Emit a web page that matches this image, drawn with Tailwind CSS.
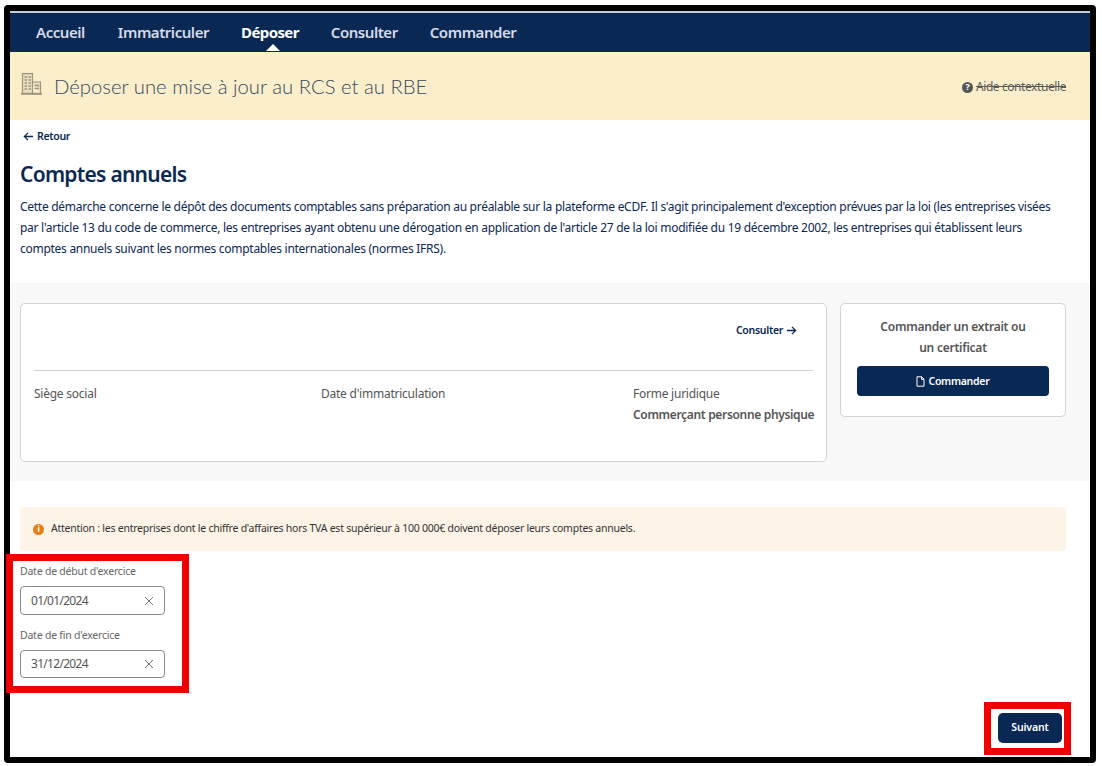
<!DOCTYPE html>
<html lang="fr">
<head>
    <meta charset="UTF-8">
    <title>Comptes annuels</title>
    <script src="https://cdn.jsdelivr.net/npm/@tailwindcss/browser@4"></script>
</head>
<body class="bg-white font-['Noto_Sans',sans-serif]">
    <div class="h-[766px] w-[1102px] overflow-hidden bg-white">
        <div class="relative ml-[4px] mt-[5px] h-[758px] w-[1092px] rounded-sm border-[6px] border-black bg-white">
            <!-- Top nav -->
            <nav class="flex h-[41px] items-center gap-8 border-t-2 border-[#c9ced6] bg-[#0a2854] pl-[26px] text-[15px] font-semibold tracking-[-0.03em] text-[#d5dbe5]">
                <a>Accueil</a>
                <a class="ml-[1px]">Immatriculer</a>
                <a class="relative font-bold tracking-[-0.04em] text-white">Déposer
                    <span class="absolute left-[25px] top-[23px] h-0 w-0 border-x-[7px] border-b-[7px] border-x-transparent border-b-white"></span>
                </a>
                <a>Consulter</a>
                <a>Commander</a>
            </nav>

            <!-- Page banner -->
            <div class="flex h-[68px] items-center justify-between bg-[#faeecb] pl-[11px] pr-[24px]">
                <div class="flex items-center gap-[12px]">
                    <svg class="mb-[4px] h-[22px] w-[21px]" viewBox="0 0 21 22" fill="#e9dfbd" stroke="#9c9580">
                        <path d="M1.5 20V.7h10V20M11.5 9h8v11" stroke-width="1.2"/>
                        <path d="M3.5 4h2.5M7.5 4H10M3.5 7h2.5M7.5 7H10M3.5 10h2.5M7.5 10H10M3.5 13h2.5M7.5 13H10M3.5 16h2.5M7.5 16H10M13.5 12.5h4.5M13.5 15.5h4.5" stroke-width="1.6"/>
                        <path d="M0 20.8h21" stroke-width="2"/>
                    </svg>
                    <h2 class="pt-[1px] font-['Lato',sans-serif] text-[20.3px] font-light text-[#3b4a5e]">Déposer une mise à jour au RCS et au RBE</h2>
                </div>
                <div class="flex items-center gap-[3px] pt-[2px] text-[12px] tracking-[-0.035em] text-[#5a5a5a]">
                    <span class="flex h-[11px] w-[11px] items-center justify-center rounded-full bg-[#555] text-[9px] font-bold text-white">?</span>
                    <span class="line-through">Aide contextuelle</span>
                </div>
            </div>

            <!-- Intro -->
            <div class="px-[10px]">
                <a class="mt-[8px] flex items-center gap-[3px] pl-[3px] text-[10.5px] font-semibold leading-[16px] tracking-[-0.03em] text-[#0a2854]">
                    <svg class="h-[11px] w-[11px]" viewBox="0 0 12 12" fill="none" stroke="currentColor" stroke-width="1.4"><path d="M11 6H1.5M5.5 2 1.5 6l4 4"/></svg>
                    Retour
                </a>
                <h1 class="mt-[17px] text-[21px] font-semibold leading-[26px] tracking-[-0.035em] text-[#0a2854]">Comptes annuels</h1>
                <p class="mt-[9px] w-[1040px] text-[12px] leading-[21px] tracking-[-0.023em] text-[#0a2854]">Cette démarche concerne le dépôt des documents comptables sans préparation au préalable sur la plateforme eCDF. Il s'agit principalement d'exception prévues par la loi (les entreprises visées par l'article 13 du code de commerce, les entreprises ayant obtenu une dérogation en application de l'article 27 de la loi modifiée du 19 décembre 2002, les entreprises qui établissent leurs comptes annuels suivant les normes comptables internationales (normes IFRS).</p>
            </div>

            <!-- Company section -->
            <section class="mt-[24px] flex h-[198px] items-start gap-[13px] bg-[#f8f8f8] px-[10px] pt-[20px]">
                <div class="h-[159px] w-[807px] rounded-[5px] border border-[#d4d4d4] bg-white px-[13px]">
                    <div class="flex h-[67px] items-start justify-end border-b border-[#d4d4d4] pr-[16px] pt-[19px]">
                        <a class="flex items-center gap-[3px] text-[10.5px] font-semibold leading-[15px] tracking-[-0.028em] text-[#0a2854]">Consulter
                            <svg class="h-[11px] w-[11px]" viewBox="0 0 12 12" fill="none" stroke="currentColor" stroke-width="1.4"><path d="M1 6h9.5M6.5 2l4 4-4 4"/></svg>
                        </a>
                    </div>
                    <div class="flex pt-[12px] text-[12px] leading-[21px] tracking-[-0.02em] text-[#555]">
                        <div class="w-[287px] shrink-0">Siège social</div>
                        <div class="w-[312px] shrink-0">Date d'immatriculation</div>
                        <div class="flex-1">
                            <div>Forme juridique</div>
                            <div class="whitespace-nowrap font-semibold tracking-[-0.0275em]">Commerçant personne physique</div>
                        </div>
                    </div>
                </div>
                <div class="h-[114px] w-[226px] rounded-[5px] border border-[#d4d4d4] bg-white px-[16px] pt-[12px] text-center">
                    <p class="text-[12px] font-semibold leading-[21px] tracking-[-0.02em] text-[#555]">Commander un extrait ou<br>un certificat</p>
                    <button class="mt-[8px] flex h-[30px] w-full items-center justify-center gap-[3px] rounded-[4px] bg-[#0a2854] pt-[1px] text-[10.5px] font-semibold tracking-[-0.025em] text-white">
                        <svg class="h-[11px] w-[9px]" viewBox="0 0 9 11" fill="none" stroke="currentColor" stroke-width="1"><path d="M1 .8h4.6L8 3.2v7H1zM5.5.8v2.5H8"/></svg>
                        Commander
                    </button>
                </div>
            </section>

            <!-- Warning -->
            <div class="ml-[10px] mt-[26px] flex h-[44px] w-[1046px] items-center gap-[7px] rounded-[4px] bg-[#fdf3e7] px-[13px] text-[10.5px] tracking-[-0.0237em] text-[#333]">
                <span class="flex h-[11px] w-[11px] items-center justify-center rounded-full bg-[#e67e16] text-[8px] font-bold text-white">i</span>
                Attention : les entreprises dont le chiffre d'affaires hors TVA est supérieur à 100 000€ doivent déposer leurs comptes annuels.
            </div>

            <!-- Date fields -->
            <form class="mt-[12px] px-[10px] text-[#666]">
                <label class="block text-[10.5px] leading-[16px] tracking-[-0.021em]">Date de début d'exercice</label>
                <div class="mt-[7px] flex h-[29px] w-[145px] items-center justify-between rounded-[4px] border border-[#8a8a8a] px-[10px] text-[12px] tracking-[-0.7px] text-[#555]">
                    01/01/2024
                    <svg class="h-[10px] w-[10px]" viewBox="0 0 10 10" stroke="#777" stroke-width="1"><path d="m1 1 8 8M9 1 1 9"/></svg>
                </div>
                <label class="mt-[12px] block text-[10.5px] leading-[16px] tracking-[-0.021em]">Date de fin d'exercice</label>
                <div class="mt-[7px] flex h-[28px] w-[145px] items-center justify-between rounded-[4px] border border-[#8a8a8a] px-[10px] text-[12px] tracking-[-0.7px] text-[#555]">
                    31/12/2024
                    <svg class="h-[10px] w-[10px]" viewBox="0 0 10 10" stroke="#777" stroke-width="1"><path d="m1 1 8 8M9 1 1 9"/></svg>
                </div>
            </form>

            <button class="absolute left-[988px] top-[702px] flex h-[30px] w-[64px] items-center justify-center rounded-[5px] bg-[#0a2854] text-[10.5px] font-semibold tracking-[-0.01em] text-white">Suivant</button>

            <!-- Red annotation frames -->
            <div class="absolute left-[-4px] top-[543px] h-[139px] w-[183px] border-[7px] border-[#f00000]"></div>
            <div class="absolute left-[974px] top-[691px] h-[53px] w-[87px] border-[7px] border-[#f00000]"></div>
        </div>
    </div>
</body>
</html>
